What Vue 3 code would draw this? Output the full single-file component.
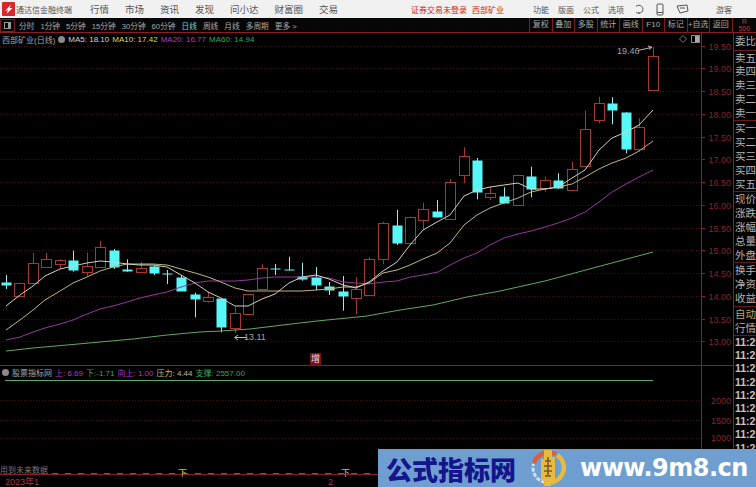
<template>
  <div class="app">
    <header class="titlebar">
      <div class="brand">
        <svg class="logo" width="13" height="14" viewBox="0 0 13 14">
          <rect width="13" height="14" rx="1" fill="#d8262a" />
          <path d="M3 9 L9 2.5 L7.6 6 L10.5 6 L4.5 12 L6 8 Z" fill="#fff" />
        </svg>
        <span>通达信金融终端</span>
      </div>
      <nav class="menu">
        <span v-for="m in menus" :key="m">{{ m }}</span>
      </nav>
      <div class="notice"><span>证券交易未登录</span><span>西部矿业</span></div>
      <nav class="sysmenu">
        <span v-for="m in sysMenus" :key="m">{{ m }}</span>
      </nav>
      <div class="sysicons">
        <svg width="10" height="11" viewBox="0 0 10 11"><path d="M2 2.5 A4 4 0 1 1 2 8 M5 8 V10" fill="none" stroke="#555" /></svg>
        <svg width="8" height="13" viewBox="0 0 8 13"><rect x="1" y="1" width="6" height="11" rx="1" fill="none" stroke="#555" /><path d="M1 9.5 H7" stroke="#555" /></svg>
        <svg width="13" height="10" viewBox="0 0 13 10"><path d="M1 2 L11 1 L12 7 L4 9 Z M4 4 H9" fill="none" stroke="#555" /></svg>
      </div>
      <span class="guest">游客</span>
    </header>

    <div class="toolbar">
      <span class="layout-icon"><i></i></span>
      <div class="periods">
        <span v-for="p in periods" :key="p" :class="{ on: p === '日线' }">{{ p }}</span>
      </div>
      <div class="tools">
        <span v-for="t in tools" :key="t">{{ t }}</span>
      </div>
      <div class="depth"><b>R</b><b>500</b></div>
    </div>

    <main class="body">
      <section class="chart">
        <svg class="plot" width="734" height="454" viewBox="0 33 734 454">
          <g class="grid">
            <line v-for="g in priceTicks" :key="g.label" x1="0" x2="701" :y1="g.y" :y2="g.y" />
            <line v-for="g in volTicks" :key="g.label" x1="0" x2="701" :y1="g.y" :y2="g.y" />
          </g>
          <line x1="701.5" x2="701.5" y1="33" y2="487" stroke="#8c1c26" />
          <line x1="0" x2="734" y1="365.5" y2="365.5" stroke="#8c1c26" />
          <line x1="0" x2="734" y1="474.5" y2="474.5" stroke="#8c1c26" />
          <line x1="5" x2="653" y1="380.5" y2="380.5" stroke="#4fae6c" />

          <g v-for="g in priceTicks" :key="'t' + g.label">
            <line x1="701" x2="705" :y1="g.y" :y2="g.y" stroke="#8c1c26" />
            <text class="tick" x="731" :y="g.y + 3" text-anchor="end">{{ g.label }}</text>
          </g>
          <text v-for="g in volTicks" :key="'v' + g.label" class="tick" x="731" :y="g.text" text-anchor="end">{{ g.label }}</text>

          <g v-for="c in candles" :key="c.x" :class="c.up ? 'red' : 'cyan'">
            <line :x1="c.x" :x2="c.x" :y1="c.hi" :y2="c.lo" />
            <rect :x="c.x - 5" :y="c.top" width="10" :height="c.bot - c.top" />
          </g>

          <polyline class="ma" stroke="#62a862" :points="ma60" />
          <polyline class="ma" stroke="#93399a" :points="ma20" />
          <polyline class="ma" stroke="#c2b47e" :points="ma10" />
          <polyline class="ma" stroke="#d2d0c2" :points="ma5" />

          <text class="note" x="617" y="54">19.46</text>
          <path d="M638 50.5 L651 47.5 M648 46 L652 47.3 L649 49.5" fill="none" stroke="#b8b8b8" />
          <path d="M247 337.5 H235 M238 335 L234.5 337.5 L238 340" fill="none" stroke="#b8b8b8" />
          <text class="note" x="244" y="340">13.11</text>

          <path d="M683 35.5 L686.5 39 L683 42.5 L679.5 39 Z" fill="none" stroke="#777" />
          <rect x="691.5" y="35.5" width="8" height="7" fill="none" stroke="#888" />
          <rect x="695" y="36" width="4" height="6" fill="#aaa" />

          <text class="future" x="0" y="473">用到未来数据</text>
          <line x1="52" x2="376" y1="473.5" y2="473.5" stroke="#c23a3a" stroke-dasharray="6 7" />
          <text class="xia" x="178" y="476">下</text>
          <text class="xia" x="341" y="476">下</text>
          <text class="axis" x="5" y="485">2023年1</text>
          <text class="axis" x="328" y="485">2</text>
        </svg>

        <div class="legend main-legend">
          <span class="name">西部矿业(日线)</span>
          <i class="dot"></i>
          <span class="c-white">MA5: 18.10</span>
          <span class="c-yellow">MA10: 17.42</span>
          <span class="c-purple">MA20: 16.77</span>
          <span class="c-green">MA60: 14.94</span>
        </div>

        <span class="zeng">增</span>

        <div class="legend sub-legend">
          <i class="dot"></i>
          <span class="name">股票指标网</span>
          <span class="c-purple">上: 6.69</span>
          <span class="c-green">下:-1.71</span>
          <span class="c-purple">向上: 1.00</span>
          <span class="c-tan">压力: 4.44</span>
          <span class="c-green">支撑: 2557.00</span>
        </div>
      </section>

      <aside class="quote">
        <div v-for="(group, i) in quoteGroups" :key="i" class="group" :style="{ height: group.h + 'px' }">
          <span v-for="q in group.items" :key="q" :class="{ auto: q === '自动' }">{{ q }}</span>
        </div>
        <div class="ticks">
          <span v-for="n in 9" :key="n">11:29</span>
        </div>
      </aside>
    </main>

    <div class="banner">
      <span class="cn">公式指标网</span>
      <svg class="seal" width="38" height="38" viewBox="0 0 38 38">
        <path d="M5 14 A15 15 0 0 1 27 5.5" fill="none" stroke="#d9603f" stroke-width="4.5" />
        <path d="M28 6 A15 15 0 0 1 22 33.5" fill="none" stroke="#e9bb3c" stroke-width="4.5" />
        <path d="M16 33.5 A15 15 0 0 1 4.5 15" fill="none" stroke="#cfe0ee" stroke-width="3" stroke-dasharray="4 1.5" />
        <path d="M15 1 H23 V8 H26 V32 H22 V37 H15 V31 H12 V10 H15 Z" fill="#e9bb3c" />
        <path d="M16 12 H22 M15 17 H23 M19 8 V27 M15 22 H23 M16 27 H22" stroke="#7b5a2a" stroke-width="1.6" fill="none" />
      </svg>
      <span class="url">www.9m8.cn</span>
    </div>
  </div>
</template>

<script setup>
const menus = ['行情', '市场', '资讯', '发现', '问小达', '财富圈', '交易']
const sysMenus = ['功能', '版面', '公式', '选项']
const periods = ['分时', '1分钟', '5分钟', '15分钟', '30分钟', '60分钟', '日线', '周线', '月线', '多周期', '更多 >']
const tools = ['复权', '叠加', '多股', '统计', '画线', 'F10', '标记', '+自选', '返回']

const quoteGroups = [
  { h: 18, items: ['委比'] },
  { h: 70, items: ['卖五', '卖四', '卖三', '卖二', '卖一'] },
  { h: 71, items: ['买一', '买二', '买三', '买四', '买五'] },
  { h: 71, items: ['现价', '涨跌', '涨幅', '总量', '外盘'] },
  { h: 44, items: ['换手', '净资', '收益'] },
  { h: 29, items: ['自动', '行情'] },
]

const priceTicks = ['19.50', '19.00', '18.50', '18.00', '17.50', '17.00', '16.50', '16.00', '15.50', '15.00', '14.50', '14.00', '13.50', '13.00']
  .map((label, i) => ({ label, y: Math.round(45.5 + i * 22.75) + 0.5 }))

const volTicks = [
  { label: '2000', y: 400.5, text: 404 },
  { label: '1500', y: 420.5, text: 424 },
  { label: '1000', y: 438.5, text: 441 },
]

// x, 实体上沿, 实体下沿, 最高, 最低, 阳线
const candles = [
  [5.7, 282, 284.5, 275, 289, 0], [19, 282.7, 296, 282.7, 296, 1], [32.7, 262.7, 282.7, 253, 282.7, 1],
  [46, 259, 267.3, 253, 267.3, 1], [59.7, 260.3, 263.7, 259, 269, 1], [73.3, 260, 269.7, 250.7, 271.7, 0],
  [86.7, 265.7, 272.3, 252.7, 276, 1], [100, 247.3, 267.3, 240.7, 267.3, 1], [113.7, 250, 267, 249, 269, 0],
  [127, 269, 271, 259.3, 271.7, 0], [140.7, 268.3, 271.7, 261.7, 271.7, 1], [154.3, 265.7, 273.3, 265.7, 275, 0],
  [167.3, 272.7, 273.6, 270, 284, 0], [181, 277, 291, 275, 291, 0], [194.7, 294, 298.7, 292.7, 317.3, 0],
  [207.7, 297.3, 300.7, 291.7, 302.7, 1], [221.3, 298.3, 327, 298.3, 332.3, 0], [235, 313.3, 328, 307, 333, 1],
  [248.3, 294, 314, 294, 314, 1], [261.7, 267.7, 289.3, 264.3, 289.3, 1], [275.3, 267.7, 268.7, 264, 275, 0],
  [288.7, 269.3, 270.4, 256.7, 270.4, 0], [302, 276.3, 279.3, 262.7, 280.7, 0], [315.7, 276.7, 285, 267, 290, 0],
  [329, 286, 289.7, 282, 295, 0], [342.7, 291, 295.7, 276, 310.7, 0], [356, 289.3, 298, 277, 314, 1],
  [369.3, 259, 294.7, 257.3, 294.7, 1], [383.3, 223.3, 259, 221.7, 264.3, 1], [396.7, 224.7, 243.3, 210, 245, 0],
  [409.7, 216.7, 243.3, 216.7, 243.3, 1], [423.3, 209.3, 220.3, 202.7, 230, 1], [437, 211, 217.3, 200, 217.3, 0],
  [450, 182, 218.7, 179.3, 218.7, 1], [463.7, 155.7, 175.3, 147.3, 183.3, 1], [477.3, 160, 192, 158, 199.3, 0],
  [490.3, 192.7, 197.3, 186.7, 200, 1], [504, 195.7, 203.3, 187.3, 203.3, 0], [518, 174.7, 205.3, 174.7, 205.3, 1],
  [531.3, 175.7, 188.7, 166.7, 197.3, 0], [544.7, 179.7, 187.7, 176.7, 191.7, 1], [558.3, 179.7, 187.7, 173.3, 189, 0],
  [572, 169, 190.3, 161.7, 190.3, 1], [585, 128.7, 165.7, 110.7, 165.7, 1], [598.7, 102.7, 120, 96.7, 123.3, 1],
  [612.3, 102.7, 110.3, 97.3, 124.3, 0], [625.7, 112.3, 149, 112.3, 153.3, 0], [639, 127.3, 149.3, 118.3, 151.7, 1],
  [652.5, 56, 90, 47, 90, 1],
].map(([x, top, bot, hi, lo, up]) => ({
  x: Math.round(x) + 0.5,
  top: Math.round(top) + 0.5,
  bot: Math.round(bot) + 0.5,
  hi,
  lo,
  up: !!up,
}))

const ma5 = '6,306 20,295 33,286 45,276 60,269 73,266 87,263 100,261 113,262 127,264 140,265 153,265 167,267 181,275 195,283 208,292 221,298 235,306 248,306 262,299 275,294 289,283 302,277 316,275 329,279 343,285 356,288 369,282 383,271 397,262 410,245 423,230 437,222 450,215 464,196 477,190 490,187 504,185 518,183 531,189 545,189 558,187 572,178 585,170 599,150 612,138 626,132 639,125 653,110'
const ma10 = '6,330 20,320 33,310 45,300 60,291 73,283 87,277 100,271 113,267 127,264 140,264 153,264 167,265 181,269 195,273 208,277 221,282 235,288 248,291 262,291 275,291 289,291 302,291 316,290 329,289 343,287 356,287 369,283 383,273 397,270 410,265 423,259 437,253 450,243 464,225 477,215 490,208 504,203 518,198 531,192 545,189 558,187 572,184 585,177 599,169 612,163 626,158 639,151 653,141'
const ma20 = '6,340 20,337 33,332 45,328 60,324 73,320 87,314 100,309 113,306 127,302 140,298 153,295 167,292 181,287 195,283 208,281 221,281 235,281 248,280 262,278 275,277 289,277 302,277 316,277 329,278 343,282 356,283 369,284 383,282 397,281 410,277 423,275 438,272 450,265 464,258 477,253 490,245 504,238 518,234 531,231 545,227 558,223 572,218 585,212 599,202 612,192 626,184 639,177 653,170'
const ma60 = '6,351 33,348 67,345 100,342 133,339 167,335 200,332 221,331 250,329 283,325 317,321 367,316 400,310 433,305 467,297 500,291 545,281 593,268 653,252'
</script>

<style scoped>
.app {
  position: relative;
  width: 756px;
  height: 487px;
  overflow: hidden;
  display: flex;
  flex-direction: column;
  background: #000;
  font-family: "Liberation Sans", "Noto Sans CJK SC", sans-serif;
}

.titlebar {
  height: 18px;
  flex: none;
  display: flex;
  align-items: center;
  background: #f1f1f1;
  color: #555;
  font-size: 9.5px;
}

.brand {
  width: 90px;
  display: flex;
  align-items: center;
  gap: 1px;
  padding-left: 2px;
  box-sizing: border-box;
  font-size: 8px;
}

.menu {
  width: 321px;
  display: flex;
  gap: 16px;
}

.notice {
  width: 122px;
  display: flex;
  gap: 5px;
  color: #c8242a;
  font-size: 8px;
}

.sysmenu {
  width: 101px;
  display: flex;
  gap: 9px;
  font-size: 8px;
}

.sysicons {
  width: 82px;
  display: flex;
  align-items: center;
  gap: 12px;
}

.guest {
  font-size: 8px;
}

.toolbar {
  height: 15px;
  flex: none;
  display: flex;
  align-items: center;
  border-bottom: 1px solid #8c1c26;
  box-sizing: border-box;
  color: #a8a8a8;
  font-size: 8px;
  background: #060606;
}

.layout-icon {
  width: 15px;
  height: 13px;
  margin-right: 4px;
  border: 1px solid #7a1e24;
  box-sizing: border-box;
  display: flex;
  align-items: center;
  justify-content: center;
}

.layout-icon i {
  width: 7px;
  height: 7px;
  border: 1px solid #999;
  box-sizing: border-box;
  border-right-width: 3px;
}

.periods {
  width: 510px;
  display: flex;
  gap: 6px;
  font-size: 7.7px;
  white-space: nowrap;
}

.periods .on {
  color: #63d8d8;
}

.tools {
  display: flex;
  height: 14px;
  border-left: 1px solid #7a1e24;
}

.tools span {
  width: 22.5px;
  box-sizing: border-box;
  border-right: 1px solid #7a1e24;
  text-align: center;
  line-height: 14px;
  white-space: nowrap;
}

.depth {
  flex: 1;
  height: 14px;
  display: flex;
  flex-direction: column;
  align-items: center;
  color: #c8343a;
  font-size: 7px;
  line-height: 7px;
}

.depth b {
  font-weight: 400;
}

.body {
  flex: 1;
  display: flex;
  min-height: 0;
}

.chart {
  position: relative;
  width: 734px;
  flex: none;
}

.plot {
  display: block;
}

.grid line {
  stroke: #4a0c12;
  stroke-dasharray: 1 2;
}

.red line,
.red rect {
  stroke: #a5392f;
  fill: #000;
}

.cyan line {
  stroke: #9be9e9;
}

.cyan rect {
  fill: #56f8f8;
}

.ma {
  fill: none;
  stroke-width: 1;
}

.tick {
  fill: #8a2228;
  font-size: 9px;
}

.note {
  fill: #a4a4a4;
  font-size: 9px;
}

.future {
  fill: #777;
  font-size: 8px;
}

.xia {
  fill: #c2b47c;
  font-size: 9px;
}

.axis {
  fill: #a8383a;
  font-size: 9px;
}

.legend {
  position: absolute;
  display: flex;
  align-items: center;
  height: 12px;
  font-size: 8px;
  white-space: nowrap;
}

.main-legend {
  top: 0;
  left: 2px;
  gap: 3px;
}

.sub-legend {
  top: 333px;
  left: 2px;
  gap: 3px;
}

.legend .name {
  color: #a6a6a6;
}

.dot {
  width: 7px;
  height: 7px;
  border-radius: 50%;
  background: #8b8b8b;
}

.c-white { color: #d4d4d4; }
.c-yellow { color: #d8d860; }
.c-purple { color: #b53ac0; }
.c-green { color: #3aa65a; }
.c-tan { color: #c8b878; }

.zeng {
  position: absolute;
  left: 310px;
  top: 320px;
  width: 11px;
  height: 13px;
  background: #7a1018;
  color: #e8dcdc;
  font-size: 9px;
  line-height: 13px;
  text-align: center;
}

.quote {
  flex: 1;
  overflow: hidden;
  border-left: 1px solid #8c1c26;
  color: #b4b4b4;
  font-size: 10.5px;
  white-space: nowrap;
  margin-left: -1px;
}

.group {
  display: flex;
  flex-direction: column;
  justify-content: space-around;
  border-bottom: 1px solid #6a1820;
  box-sizing: border-box;
  padding-left: 1px;
  line-height: 12.7px;
}

.group .auto {
  color: #b8a860;
}

.ticks {
  height: 113px;
  overflow: hidden;
  display: flex;
  flex-direction: column;
  padding-left: 1px;
  box-sizing: border-box;
  font-size: 10.5px;
  font-weight: 700;
  line-height: 13.2px;
  color: #c4c4c4;
}

.banner {
  position: absolute;
  left: 378px;
  right: 0;
  bottom: 0;
  height: 38px;
  display: flex;
  align-items: center;
  background: #6f9fd0;
}

.cn {
  width: 146px;
  padding-left: 8px;
  box-sizing: border-box;
  color: #14148c;
  font-size: 26px;
  font-weight: 900;
  font-family: "Noto Sans CJK SC", sans-serif;
  white-space: nowrap;
}

.seal {
  margin-left: 5px;
}

.url {
  margin-left: 13px;
  color: #fff;
  font-family: "DejaVu Sans", sans-serif;
  font-size: 24px;
  font-weight: 700;
  white-space: nowrap;
  letter-spacing: -0.5px;
}
</style>
